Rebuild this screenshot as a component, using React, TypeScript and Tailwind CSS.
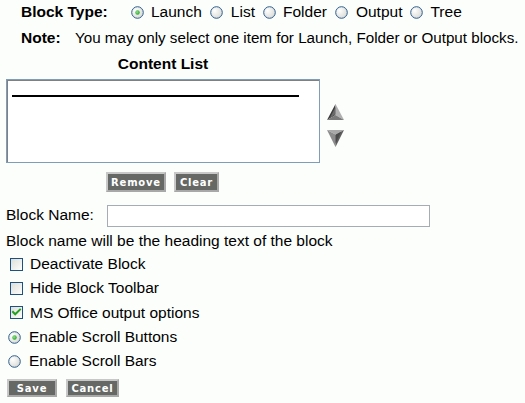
import React from "react";

const Radio = ({ checked = false }: { checked?: boolean }) => (
  <svg width="13" height="13" viewBox="0 0 13 13" className="shrink-0">
    <defs>
      <radialGradient id="rg" cx="0.35" cy="0.35" r="0.8">
        <stop offset="0" stopColor="#ffffff" />
        <stop offset="1" stopColor="#d4d4cf" />
      </radialGradient>
      <radialGradient id="gd" cx="0.4" cy="0.4" r="0.7">
        <stop offset="0" stopColor="#8ee58e" />
        <stop offset="1" stopColor="#1d9a1d" />
      </radialGradient>
    </defs>
    <circle cx="6.5" cy="6.5" r="5.8" fill="url(#rg)" stroke="#2e5f8f" strokeWidth="1" />
    {checked && <circle cx="6.5" cy="6.5" r="2.2" fill="url(#gd)" />}
  </svg>
);

const Check = ({ checked = false }: { checked?: boolean }) => (
  <svg width="13" height="13" viewBox="0 0 13 13" className="shrink-0">
    <defs>
      <linearGradient id="cg" x1="0" y1="0" x2="1" y2="1">
        <stop offset="0" stopColor="#dcdcd7" />
        <stop offset="1" stopColor="#ffffff" />
      </linearGradient>
    </defs>
    <rect x="0.5" y="0.5" width="12" height="12" fill="url(#cg)" stroke="#1c5180" strokeWidth="1" />
    {checked && (
      <path d="M3 6 L5.2 8.3 L10 3.6" fill="none" stroke="#21a121" strokeWidth="2" strokeLinecap="square" />
    )}
  </svg>
);

const Btn = ({ label, w, h }: { label: string; w: string; h: string }) => (
  <div
    className={`${w} ${h} flex items-center justify-center bg-[#656865] border-2 border-t-[#c8c8c8] border-l-[#c8c8c8] border-r-[#a8a8a8] border-b-[#a8a8a8] text-white font-bold text-[10px] tracking-[0.8px]`}
    style={{ fontFamily: '"DejaVu Sans", sans-serif' }}
  >
    {label}
  </div>
);

const UpArrow = () => (
  <svg width="17" height="16" viewBox="0 0 17 16">
    <polygon points="8.5,0 0,16 8.5,11" fill="#3c3c3c" />
    <polygon points="8.5,0 8.5,11 17,16" fill="#b0b0b0" />
    <polygon points="0,16 17,16 8.5,11" fill="#7a7a7a" />
    <polygon points="8.5,3 2.8,14 8.5,10.3" fill="#6a6a6a" />
  </svg>
);

const DownArrow = () => (
  <svg width="17" height="17" viewBox="0 0 17 17">
    <polygon points="0,0 17,0 8.5,4.5" fill="#a8a8a8" />
    <polygon points="0,0 8.5,4.5 8.5,17" fill="#8c8c8c" />
    <polygon points="17,0 8.5,4.5 8.5,17" fill="#5e5e5e" />
    <polygon points="14,1.8 8.5,5 8.5,13.5" fill="#4a4a4a" />
  </svg>
);

export default function App() {
  return (
    <div
      className="w-[525px] h-[403px] bg-[#fcfefc] text-black text-[15.5px] relative overflow-hidden whitespace-nowrap"
      style={{ fontFamily: '"Liberation Sans", Arial, sans-serif' }}
    >
      <div className="flex flex-col">
        {/* Block Type */}
        <div className="h-[24px] flex items-center pl-[21px]">
          <span className="font-bold w-[110px] shrink-0">Block Type:</span>
          <div className="flex items-center shrink-0">
            <Radio checked />
            <span className="ml-[7px]">Launch</span>
            <span className="ml-[8px] flex"><Radio /></span>
            <span className="ml-[8px]">List</span>
            <span className="ml-[8px] flex"><Radio /></span>
            <span className="ml-[7px]">Folder</span>
            <span className="ml-[8px] flex"><Radio /></span>
            <span className="ml-[8px]">Output</span>
            <span className="ml-[8px] flex"><Radio /></span>
            <span className="ml-[7px]">Tree</span>
          </div>
        </div>
        {/* Note */}
        <div className="h-[28px] flex items-center pl-[21px]">
          <span className="font-bold w-[54px] shrink-0">Note:</span>
          <span className="shrink-0 text-[15.2px]">You may only select one item for Launch, Folder or Output blocks.</span>
        </div>
        {/* Content List */}
        <div className="h-[24px] flex items-center justify-center w-[326px] font-bold">
          Content List
        </div>
        <div className="mt-[3px] flex items-start pl-[6px]">
          <div className="w-[314px] h-[84px] border border-[#7f9db9] bg-white">
            <div className="w-full h-full border-t border-l border-[#808080] pt-[14px] pl-[4px]">
              <div className="w-[287px] h-[2px] bg-black" />
            </div>
          </div>
          <div className="ml-[7px] mt-[25px] flex flex-col gap-[10px]">
            <UpArrow />
            <DownArrow />
          </div>
        </div>
        {/* Remove / Clear */}
        <div className="mt-[9px] flex pl-[106px] gap-[8px]">
          <Btn label="Remove" w="w-[60px]" h="h-[20px]" />
          <Btn label="Clear" w="w-[45px]" h="h-[20px]" />
        </div>
        {/* Block Name */}
        <div className="mt-[13px] h-[22px] flex items-center pl-[6px]">
          <span className="w-[101px] -mt-[3px]">Block Name:</span>
          <div className="w-[323px] h-[22px] border border-[#a5acb5] bg-white" />
        </div>
        <div className="mt-[3px] h-[22px] flex items-center pl-[6px]">
          Block name will be the heading text of the block
        </div>
        <div className="h-[24px] flex items-center pl-[10px]">
          <Check />
          <span className="ml-[7px]">Deactivate Block</span>
        </div>
        <div className="h-[24px] flex items-center pl-[10px]">
          <Check />
          <span className="ml-[7px]">Hide Block Toolbar</span>
        </div>
        <div className="h-[25px] flex items-center pl-[10px]">
          <Check checked />
          <span className="ml-[7px]">MS Office output options</span>
        </div>
        <div className="h-[24px] flex items-center pl-[8px]">
          <Radio checked />
          <span className="ml-[8px]">Enable Scroll Buttons</span>
        </div>
        <div className="h-[24px] flex items-center pl-[8px]">
          <Radio />
          <span className="ml-[8px]">Enable Scroll Bars</span>
        </div>
        <div className="mt-[6px] flex pl-[7px] gap-[9px]">
          <Btn label="Save" w="w-[50px]" h="h-[18px]" />
          <Btn label="Cancel" w="w-[53px]" h="h-[18px]" />
        </div>
      </div>
    </div>
  );
}
